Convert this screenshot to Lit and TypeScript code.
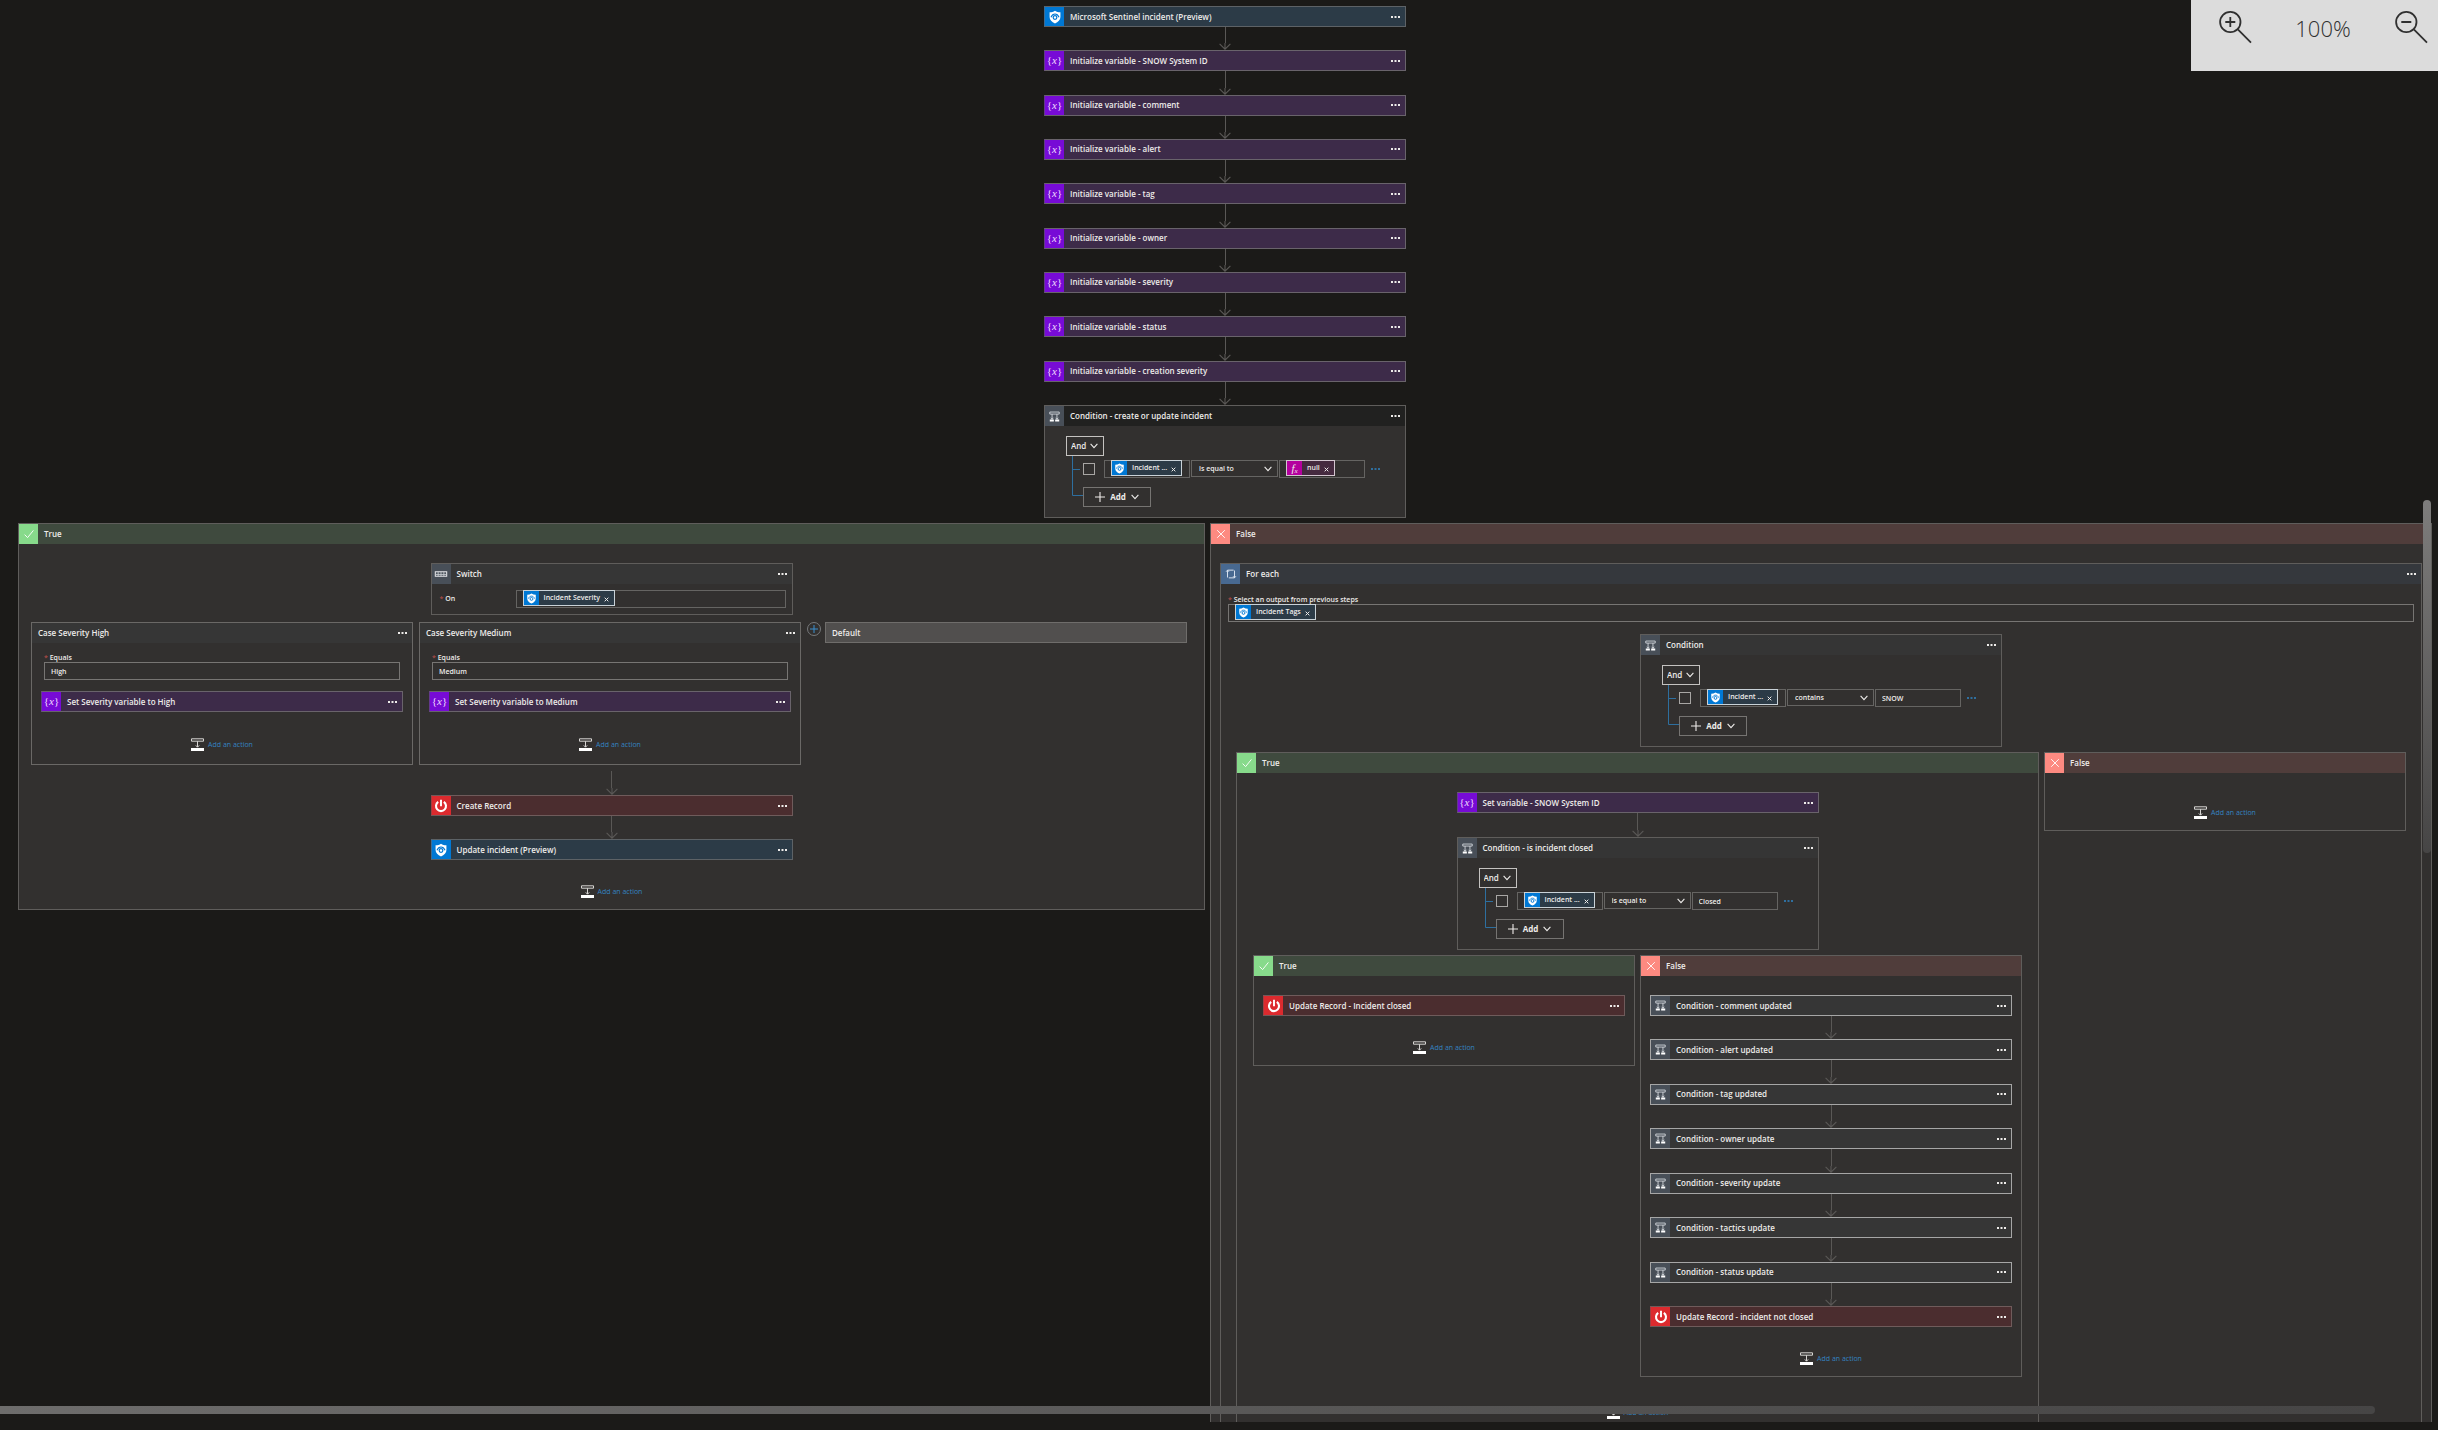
import { LitElement, html, css, svg, TemplateResult } from "lit";
import { customElement, property } from "lit/decorators.js";

type Kind = "sentinel" | "variable" | "condition" | "record" | "switch" | "loop";

const shield = html`<svg class="glyph" viewBox="0 0 16 16" aria-hidden="true">
  <path d="M8 .8 C9.8 2 11.8 2.6 14.2 2.7 V8 C14.2 11.4 11.6 13.8 8 15.4 C4.4 13.8 1.8 11.4 1.8 8 V2.7 C4.2 2.6 6.2 2 8 .8 Z" fill="#fff" />
  <path d="M3.4 8.2 C4.6 5.6 6 4.6 8 4.6 S11.4 5.6 12.6 8.2" fill="none" stroke="#0078d4" stroke-width="1.3" />
  <circle cx="8" cy="8.6" r="2.1" fill="#fff" stroke="#0078d4" stroke-width="1.4" />
</svg>`;

const power = html`<svg class="glyph" viewBox="0 0 16 16" aria-hidden="true">
  <path d="M4.8 3.4 A5.7 5.7 0 1 0 11.2 3.4" fill="none" stroke="#fff" stroke-width="2.4" />
  <path d="M8 .8 V8.4" stroke="#fff" stroke-width="2.2" />
</svg>`;

const fork = html`<svg class="glyph" viewBox="0 0 16 16" aria-hidden="true">
  <path d="M2.2 2.5 H13.8 V5 H2.2 Z" fill="none" stroke="#dfe3e8" stroke-width="1" />
  <path d="M5 5 V11.5 M11 5 V11.5 M3.4 9.6 L5 11.4 L6.6 9.6 M9.4 9.6 L11 11.4 L12.6 9.6" fill="none" stroke="#dfe3e8" stroke-width="1" />
  <path d="M2.2 11.8 H7.2 V14.2 H2.2 Z M8.8 11.8 H13.8 V14.2 H8.8 Z" fill="#fff" />
</svg>`;

const keypad = html`<svg class="glyph" viewBox="0 0 16 16" aria-hidden="true">
  <path d="M1.5 5.5 H14.5 V10.5 H1.5 Z" fill="none" stroke="#e6e8ea" stroke-width="1.2" />
  <path d="M4.75 5.5 V10.5 M8 5.5 V10.5 M11.25 5.5 V10.5 M2 8.5 H14" stroke="#c7cbd0" stroke-width="1" />
</svg>`;

const cycle = html`<svg class="glyph" viewBox="0 0 16 16" aria-hidden="true">
  <path d="M4 12 V3.6 H11 M12 4 V12.4 H5.5 M2.4 5.4 L4 3.6 L5.6 5.4 M10.4 10.6 L12 12.4 L13.6 10.6" fill="none" stroke="#dbe4f0" stroke-width="1.1" />
</svg>`;

const glyphs: Record<Kind, TemplateResult> = {
  sentinel: shield,
  variable: html`<span class="math" aria-hidden="true">{<i>x</i>}</span>`,
  condition: fork,
  record: power,
  switch: keypad,
  loop: cycle,
};

const chevron = html`<svg class="chevron" viewBox="0 0 8 6" aria-hidden="true">
  <path d="M.6 .9 L4 4.6 L7.4 .9" fill="none" stroke="currentColor" stroke-width="1.1" />
</svg>`;

const dots = (label: string, tone = "") => html`<button class="dots ${tone}" aria-label=${label}>
  <svg viewBox="0 0 9 2" aria-hidden="true">${[0, 3.5, 7].map((x) => svg`<rect x=${x} width="2" height="2" fill="currentColor" />`)}</svg>
</button>`;

const token = (text: string, kind: "sentinel" | "fx" = "sentinel") => html`<span class="token ${kind}">
  <span class="token-mark">${kind === "fx" ? html`<i class="formula">f<sub>x</sub></i>` : shield}</span>
  <span class="token-text">${text}</span>
  <button class="token-x" aria-label="Remove ${text}">
    <svg viewBox="0 0 6 6" aria-hidden="true"><path d="M.8 .8 L5.2 5.2 M5.2 .8 L.8 5.2" stroke="currentColor" stroke-width="1.2" /></svg>
  </button>
</span>`;

const base = css`
  * { box-sizing: border-box; }
  :host { display: block; box-sizing: border-box; font: 600 8px/10px "Open Sans", "Noto Sans", sans-serif; color: #eeecea; }
  button, input, select {
    font: inherit; color: inherit; background: none; border: 0; border-radius: 0;
    margin: 0; padding: 0; appearance: none; outline: none; min-width: 0;
  }
  svg { display: block; }
  .mark { flex: none; width: 19px; align-self: stretch; display: flex; align-items: center; justify-content: center; }
  .glyph { width: 14px; height: 14px; }
  .math { font: 400 11px/14px "Liberation Serif", serif; color: #f1dcff; padding-bottom: 1px; }
  .mark.sentinel { background: #0078d4; }
  .mark.variable { background: #770bd6; }
  .mark.condition, .mark.switch { background: #484f58; }
  .mark.condition .glyph { width: 13px; height: 13px; }
  .mark.record { background: #dc2a2e; }
  .mark.loop { background: #486991; }
  .title { flex: 1; padding-left: 6px; white-space: nowrap; }
  .head { display: flex; align-items: center; height: 20px; }
  .dots { flex: none; padding: 4px 5px; }
  .dots svg { width: 9px; height: 2px; }
  .dots.blue { color: #2f6f9f; }
  .field { display: block; height: 18px; border: 1px solid #656462; padding: 0 6px; }
  input.field { width: 100%; font-size: 7px; }
  .caption { display: block; font-size: 7px; line-height: 8px; white-space: nowrap; }
  .caption i { color: #c2504d; font-style: normal; font-weight: 400; }
  .token {
    display: inline-flex; align-items: center; height: 16px; margin-top: -1px;
    border: 1px solid #c9d2d8; background: #2c3b47; font-size: 7px; vertical-align: top;
  }
  .token.fx { background: #452a3f; border-color: #d3c6d0; }
  .token-mark { width: 15px; align-self: stretch; display: flex; align-items: center; justify-content: center; background: #0078d4; }
  .fx .token-mark { background: #b4009e; }
  .token-mark .glyph { width: 11px; height: 11px; }
  .formula { font: italic 400 11px/12px "Liberation Serif", serif; }
  .formula sub { font-size: 7px; line-height: 0; vertical-align: -1px; }
  .token-text { padding-left: 5px; white-space: nowrap; }
  .token-x { padding: 4px 5px 2px 4px; }
  .token-x svg { width: 5px; height: 5px; }
  .chevron { width: 8px; height: 6px; }
`;

/** One collapsed step: accent mark, name and its menu. */
@customElement("step-card")
export class StepCard extends LitElement {
  @property() kind: Kind = "variable";
  @property() name = "";
  static styles = [base, css`
    :host { width: 362px; }
    .card { display: flex; align-items: center; height: 21px; border: 1px solid #69636b; }
    .card.sentinel { background: #2c3b47; border-color: #5d6266; border-left-color: #3c6c94; }
    .card.variable { background: #3d2b49; border-left-color: #63388c; }
    .card.record { background: #4b2d2f; border-color: #6f5b5b; border-left-color: #a33d40; }
    .card.condition { background: #363636; border-color: #a6a6a6; }
  `];
  render() {
    return html`<div class="card ${this.kind}">
      <span class="mark ${this.kind}">${glyphs[this.kind]}</span>
      <span class="title">${this.name}</span>
      ${dots(`Menu for ${this.name}`)}
    </div>`;
  }
}

/** Downward connector; stretches when its column has room to spare. */
@customElement("step-arrow")
export class StepArrow extends LitElement {
  static styles = css`
    :host { display: flex; flex-direction: column; align-items: center; flex: 1 0 23px; width: 12px; color: #5a5856; }
    .stem { flex: 1; width: 1px; background: currentColor; }
    svg { display: block; width: 12px; height: 7px; flex: none; }
  `;
  render() {
    return html`<span class="stem"></span>
      <svg viewBox="0 0 12 7" aria-hidden="true"><path d="M6 0 V6 M.6 .8 L6 6.2 L11.4 .8" fill="none" stroke="currentColor" stroke-width="1.1" /></svg>`;
  }
}

@customElement("add-action")
export class AddAction extends LitElement {
  static styles = [base, css`
    button { display: flex; align-items: center; gap: 4px; height: 13px; margin: 0 auto; color: #3483c0; font-size: 7px; font-weight: 400; cursor: pointer; }
    svg { width: 13px; height: 13px; }
  `];
  render() {
    return html`<button>
      <svg viewBox="0 0 13 13" aria-hidden="true">
        <path d="M.5 .8 H12.5 V3.2 H.5 Z M6.5 3.2 V9 M4.8 7.4 L6.5 9.2 L8.2 7.4" fill="none" stroke="#d6d4d2" />
        <path d="M0 10 H13 V13 H0 Z" fill="#fff" />
      </svg>
      <span>Add an action</span>
    </button>`;
  }
}

/** Expanded condition with a single rule. */
@customElement("condition-card")
export class ConditionCard extends LitElement {
  @property() name = "";
  @property() operator = "is equal to";
  @property() value = "";
  @property() expression = "";
  static styles = [base, css`
    :host { width: 362px; }
    .card { border: 1px solid #5f5d5b; background: #32302f; }
    .head { background: #353535; }
    :host([dark]) .head { background: #212120; }
    .body { padding: 10px 0 10px 21px; }
    .picker { display: inline-grid; align-items: center; vertical-align: top; }
    .picker > * { grid-area: 1 / 1; }
    .picker .chevron { justify-self: end; margin-right: 5px; pointer-events: none; }
    .join { width: 38px; height: 20px; border: 1px solid #c4c2c0; }
    .join select { height: 18px; padding-left: 4px; width: 100%; }
    .tree { display: flex; margin-left: 6px; }
    .lines { width: 11px; height: 41px; flex: none; color: #2e6f9f; }
    .rules { display: flex; flex-direction: column; gap: 9px; padding-top: 4px; align-items: flex-start; }
    .rule { display: flex; align-items: center; gap: 1px; }
    .tick { width: 12px; height: 12px; border: 1px solid #a8a6a4; margin-right: 8px; }
    .rule .field { width: 86px; }
    .rule .picker { border: 1px solid #656462; height: 17px; width: 87px; align-self: flex-start; }
    .rule .picker select { width: 100%; height: 15px; padding-left: 7px; font-size: 7px; }
    .add { display: flex; align-items: center; justify-content: center; gap: 5px; width: 68px; height: 20px; border: 1px solid #767472; font-weight: 700; }
    .plus { width: 10px; height: 10px; }
  `];
  render() {
    return html`<section class="card">
      <header class="head">
        <span class="mark condition">${fork}</span>
        <span class="title">${this.name}</span>
        ${dots(`Menu for ${this.name}`)}
      </header>
      <div class="body">
        <span class="picker join">
          <select aria-label="Combine rules with"><option>And</option><option>Or</option></select>${chevron}
        </span>
        <div class="tree">
          <svg class="lines" viewBox="0 0 11 41" aria-hidden="true"><path d="M.5 0 V39.5 H11 M.5 13.5 H8" fill="none" stroke="currentColor" /></svg>
          <div class="rules">
            <div class="rule">
              <input class="tick" type="checkbox" aria-label="Select rule" />
              <span class="field">${token("Incident ...")}</span>
              <span class="picker">
                <select aria-label="Operator"><option>${this.operator}</option></select>${chevron}
              </span>
              ${this.expression
                ? html`<span class="field">${token(this.expression, "fx")}</span>`
                : html`<input class="field" aria-label="Value" .value=${this.value} />`}
              ${dots("Rule menu", "blue")}
            </div>
            <button class="add" aria-haspopup="menu">
              <svg class="plus" viewBox="0 0 10 10" aria-hidden="true"><path d="M5 0 V10 M0 5 H10" stroke="currentColor" stroke-width="1.1" /></svg>
              <span>Add</span>${chevron}
            </button>
          </div>
        </div>
      </div>
    </section>`;
  }
}

/** True / False branch container. */
@customElement("branch-panel")
export class BranchPanel extends LitElement {
  @property({ type: Boolean }) yes = false;
  static styles = [base, css`
    .panel { border: 1px solid #5f5d5b; background: #32302f; }
    .head { background: #503d3b; }
    .yes .head { background: #3f4a3e; }
    .mark { background: #fd8a81; }
    .yes .mark { background: #87da8b; }
    .mark svg { width: 10px; height: 10px; }
    .content { display: flex; flex-direction: column; align-items: center; padding: 19px var(--branch-pad, 9px) 11px; }
  `];
  render() {
    return html`<section class="panel ${this.yes ? "yes" : "no"}">
      <header class="head">
        <span class="mark">
          <svg viewBox="0 0 10 10" aria-hidden="true">
            <path d=${this.yes ? "M.6 5.6 L3.6 8.6 L9.4 1.4" : "M1.2 1.2 L8.8 8.8 M8.8 1.2 L1.2 8.8"} fill="none" stroke="#fff" stroke-width=".9" />
          </svg>
        </span>
        <span class="title">${this.yes ? "True" : "False"}</span>
      </header>
      <div class="content"><slot></slot></div>
    </section>`;
  }
}

@customElement("case-panel")
export class CasePanel extends LitElement {
  @property() level = "";
  static styles = [base, css`
    :host { width: 382px; }
    .card { border: 1px solid #6a6866; background: #32302f; }
    .head { background: #363636; }
    .body { display: flex; flex-direction: column; padding: 11px 9px 13px; }
    .equals { padding: 0 3px; margin-bottom: 11px; }
    .equals .field { border-color: #777573; }
    add-action { margin-top: 26px; }
  `];
  render() {
    return html`<section class="card">
      <header class="head"><span class="title">Case Severity ${this.level}</span>${dots(`Menu for case ${this.level}`)}</header>
      <div class="body">
        <label class="equals"><span class="caption"><i>*</i> Equals</span><input class="field" .value=${this.level} /></label>
        <step-card kind="variable" name="Set Severity variable to ${this.level}"></step-card>
        <add-action></add-action>
      </div>
    </section>`;
  }
}

@customElement("zoom-bar")
export class ZoomBar extends LitElement {
  static styles = css`
    :host { display: flex; align-items: flex-start; justify-content: space-between; width: 247px; height: 71px; padding: 10px 10px 0 27px; box-sizing: border-box; background: #dcdcdc; color: #303030; }
    button { border: 0; padding: 0; background: none; color: inherit; }
    svg { display: block; width: 34px; height: 34px; }
    output { font: 300 22px/36px "Open Sans", "Noto Sans", sans-serif; }
  `;
  private lens(label: string, sign: string) {
    return html`<button aria-label=${label}><svg viewBox="0 0 34 34" aria-hidden="true">
      <path d="M22.5 12 A10.2 10.2 0 1 1 2.1 12 A10.2 10.2 0 1 1 22.5 12 M19.6 19.2 L33 32.6 ${sign}" fill="none" stroke="currentColor" stroke-width="1.8" />
    </svg></button>`;
  }
  render() {
    return html`${this.lens("Zoom in", "M7.3 12 H17.3 M12.3 7 V17")}<output>100%</output>${this.lens("Zoom out", "M7.3 12 H17.3")}`;
  }
}

const variables = ["SNOW System ID", "comment", "alert", "tag", "owner", "severity", "status", "creation severity"];
const updates = ["comment updated", "alert updated", "tag updated", "owner update", "severity update", "tactics update", "status update"];

@customElement("app-root")
export class AppRoot extends LitElement {
  static styles = [base, css`
    :host { position: relative; height: 100vh; padding-bottom: 8px; background: #1b1a18; overflow: hidden; }
    .canvas { height: 100%; overflow: hidden; padding: 6px 6px 0 18px; display: flex; flex-direction: column; align-items: center; }
    .canvas > * { flex: none; }
    .chain { display: flex; flex-direction: column; align-items: center; }
    .chain.lead { min-height: 399px; }
    .chain.updates { min-height: 311px; }
    .short { flex: 0 0 24px; }
    .branches { display: flex; align-items: flex-start; justify-content: center; gap: 5px; margin-top: 5px; }
    .top { align-self: stretch; }
    .grow { flex: 1; }
    .nested { --branch-pad: 15px; }
    .leaf { --branch-pad: 9px; width: 382px; }
    .empty { --branch-pad: 9px; width: 362px; }
    .empty add-action { margin-top: 14px; }
    .switch-side { --branch-pad: 12px; }
    .box { border: 1px solid #5f5d5b; background: #32302f; }
    .switch-box { width: 362px; }
    .switch-box .head { background: #363636; }
    .switch-box .row { display: flex; align-items: center; padding: 6px; }
    .switch-box .caption { width: 78px; padding-left: 2px; }
    .switch-box .field { flex: 1; }
    .cases { display: flex; align-items: flex-start; gap: 6px; margin: 7px 5px 0 0; }
    .plus-case { width: 14px; height: 14px; flex: none; margin-right: -2px; }
    .plus-case svg { width: 14px; height: 14px; }
    .default { display: flex; width: 362px; height: 21px; align-items: center; background: #514f4e; border: 1px solid #6f6d6b; }
    .after-cases { margin-top: 6px; }
    .tail { margin-top: 25px; }
    .deep-tail { margin-top: 29px; }
    .loop-box { align-self: stretch; }
    .loop-box .head { background: #35383d; }
    .loop-box .output { display: block; padding: 12px 7px 0; }
    .loop-box .output .field { border-color: #777573; }
    .loop-box .content { display: flex; flex-direction: column; align-items: center; padding: 12px 15px; }
    .loop-box .branches { align-self: stretch; }
    .bar { position: absolute; border-radius: 4px; }
    .bar.x { left: 0; right: 63px; bottom: 16px; height: 8px; border-radius: 0 4px 4px 0; background: linear-gradient(90deg, #6e6d6c, #464545); }
    .bar.y { right: 7px; top: 500px; width: 8px; height: 353px; background: linear-gradient(#7e7d7c, #464545); }
    zoom-bar { position: absolute; top: 0; right: 0; }
  `];

  private switchSide() {
    return html`<branch-panel class="switch-side" yes>
      <section class="box switch-box">
        <header class="head"><span class="mark switch">${keypad}</span><span class="title">Switch</span>${dots("Menu for Switch")}</header>
        <div class="row"><span class="caption"><i>*</i> On</span><span class="field">${token("Incident Severity")}</span></div>
      </section>
      <div class="cases">
        <case-panel level="High"></case-panel>
        <case-panel level="Medium"></case-panel>
        <button class="plus-case" aria-label="Add case">
          <svg viewBox="0 0 14 14" aria-hidden="true"><circle cx="7" cy="7" r="6.5" fill="none" stroke="#77797b" /><path d="M7 3 V11 M3 7 H11" stroke="#3a8fd0" /></svg>
        </button>
        <div class="default"><span class="title">Default</span></div>
      </div>
      <step-arrow class="short after-cases"></step-arrow>
      <step-card kind="record" name="Create Record"></step-card>
      <step-arrow></step-arrow>
      <step-card kind="sentinel" name="Update incident (Preview)"></step-card>
      <add-action class="tail"></add-action>
    </branch-panel>`;
  }

  private closedCheck() {
    return html`<branch-panel class="nested grow" yes>
      <step-card kind="variable" name="Set variable - SNOW System ID"></step-card>
      <step-arrow class="short"></step-arrow>
      <condition-card name="Condition - is incident closed" value="Closed"></condition-card>
      <div class="branches">
        <branch-panel class="leaf" yes>
          <step-card kind="record" name="Update Record - Incident closed"></step-card>
          <add-action class="tail"></add-action>
        </branch-panel>
        <branch-panel class="leaf">
          <div class="chain updates">
            ${updates.map((name) => html`<step-card kind="condition" name="Condition - ${name}"></step-card><step-arrow></step-arrow>`)}
          </div>
          <step-card kind="record" name="Update Record - incident not closed"></step-card>
          <add-action class="tail"></add-action>
        </branch-panel>
      </div>
      <add-action class="deep-tail"></add-action>
    </branch-panel>`;
  }

  render() {
    return html`
      <main class="canvas">
        <div class="chain lead">
          <step-card kind="sentinel" name="Microsoft Sentinel incident (Preview)"></step-card>
          ${variables.map((name) => html`<step-arrow></step-arrow><step-card kind="variable" name="Initialize variable - ${name}"></step-card>`)}
          <step-arrow></step-arrow>
        </div>
        <condition-card dark name="Condition - create or update incident" expression="null"></condition-card>
        <div class="branches top">
          ${this.switchSide()}
          <branch-panel class="grow">
            <section class="box loop-box">
              <header class="head"><span class="mark loop">${cycle}</span><span class="title">For each</span>${dots("Menu for For each")}</header>
              <div class="output"><span class="caption"><i>*</i> Select an output from previous steps</span><span class="field">${token("Incident Tags")}</span></div>
              <div class="content">
                <condition-card name="Condition" operator="contains" value="SNOW"></condition-card>
                <div class="branches">
                  ${this.closedCheck()}
                  <branch-panel class="empty"><add-action></add-action></branch-panel>
                </div>
              </div>
            </section>
          </branch-panel>
        </div>
      </main>
      <div class="bar x"></div>
      <div class="bar y"></div>
      <zoom-bar></zoom-bar>
    `;
  }
}
